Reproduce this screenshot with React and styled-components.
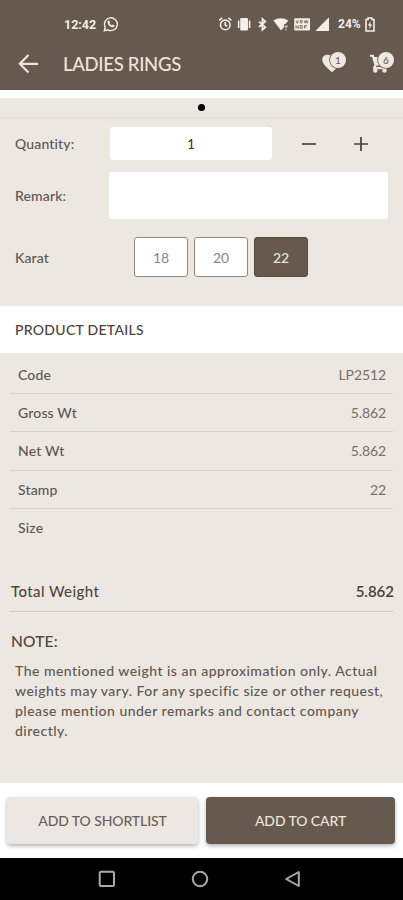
import React from 'react'
import styled, { createGlobalStyle } from 'styled-components'

const details = [
    { label: 'Code', value: 'LP2512' },
    { label: 'Gross Wt', value: '5.862' },
    { label: 'Net Wt', value: '5.862' },
    { label: 'Stamp', value: '22' },
    { label: 'Size', value: '' },
]

const noteLines = [
    'The mentioned weight is an approximation only. Actual',
    'weights may vary. For any specific size or other request,',
    'please mention under remarks and contact company',
    'directly.',
]

const StatusIcons = () => (
    <svg width="112" height="16" viewBox="218 16 112 16" fill="#f4eee8">
        {/* alarm */}
        <g fill="none" stroke="#f4eee8" strokeWidth="1.6">
            <circle cx="225.3" cy="24.9" r="4.8" />
            <path d="M219.2 20.3l3-2.5M231.4 20.3l-3-2.5M225.3 22v3.2l2 1" />
        </g>
        {/* vibrate */}
        <rect x="240.2" y="18" width="7.8" height="12.6" rx="1" />
        <path d="M237.8 20.5h1.6v7.6h-1.6zM248.8 20.5h1.6v7.6h-1.6z" />
        {/* bluetooth */}
        <path
            d="M259 21.6l6.4 5.6-3 2.6V18.8l3 2.6-6.4 5.6"
            fill="none"
            stroke="#f4eee8"
            strokeWidth="1.7"
        />
        {/* wifi */}
        <path d="M273.4 20.6c4.4-3.3 10.2-3.3 15 0l-3 3.4h-1.2v3l-3.2 3.4z" />
        <path d="M285 25.5h2.8v1.8h-1.4v1h-1.2zM285.2 29h1.3v1.4h-1.3z" opacity=".65" />
        {/* vowifi */}
        <rect x="294.2" y="18.2" width="15.8" height="12.2" rx=".8" />
        <path
            d="M296 20.4l1.2 3 1.2-3M300.2 20.5h2v2.4h-2zM304.2 20.4l1 2.8 1-2.8 1 2.8.8-2.8M296 28.5v-3l2.2 3v-3M300 25.6h2.4v2.6H300zM304.5 28.4v-2.8h2.6M304.5 27h2"
            fill="none"
            stroke="#66594e"
            strokeWidth=".8"
        />
        {/* signal */}
        <path d="M315.3 31H329V17.3z" />
    </svg>
)

const App = () => {
    return (
        <Screen>
            <GlobalStyle />
            <TopBar>
                <Status>
                    <Clock>12:42</Clock>
                    <svg width="16" height="16" viewBox="0 0 16 16" fill="none" stroke="#f4eee8">
                        <path d="M1.3 14.8l1-3.5A6.4 6.4 0 1 1 4.8 13.8z" strokeWidth="1.4" />
                        <path
                            d="M5.2 4.6l1-.2.9 2-.6.8c.6 1.1 1.3 1.8 2.4 2.2l.8-.8 1.9 1c0 1.2-1 1.8-2 1.7-2.5-.3-4.9-2.8-5.1-4.9 0-.8.3-1.4.7-1.8z"
                            fill="#f4eee8"
                            stroke="none"
                        />
                    </svg>
                    <StatusRight>
                        <StatusIcons />
                        <Battery>24%</Battery>
                        <svg width="10" height="15" viewBox="0 0 10 15">
                            <path
                                d="M1 2.5h2V1h4v1.5h2V14H1z"
                                fill="none"
                                stroke="#f4eee8"
                                strokeWidth="1.6"
                            />
                            <path d="M5.6 4.2L2.8 8.6h1.9l-.4 3.4 2.9-4.4H5.3z" fill="#f4eee8" />
                        </svg>
                    </StatusRight>
                </Status>
                <Header>
                    <svg width="20" height="20" viewBox="0 0 20 20" fill="none" stroke="#efe4da" strokeWidth="2.2">
                        <path d="M10.5 1L1.8 9.8l8.7 8.8M2 9.8h18" />
                    </svg>
                    <Title>LADIES RINGS</Title>
                    <Counter>
                        <svg width="20" height="20" viewBox="0 0 20 20" fill="#efe8e1">
                            <path d="M10 18.2C5.5 14.2.6 10.5.3 6 .1 3 2.3.8 5.3.8 7.3.8 9 1.6 10 3 11 1.6 12.7.8 14.7.8c3 0 5.2 2.2 5 5.2-.3 4.5-5.2 8.2-9.7 12.2z" />
                        </svg>
                        <Badge>1</Badge>
                    </Counter>
                    <Counter $last>
                        <svg width="20" height="20" viewBox="0 0 20 20" fill="#efe8e1">
                            <path d="M0 .8h3.6l.9 2.2h13.500l-2.500 8.600H6.600l-.6 1.400h11v2.200H3.400l-.5-1.800 1.500-2.500L2 2.800H0z" />
                            <circle cx="5.3" cy="16.6" r="2.2" />
                            <circle cx="14.5" cy="16.6" r="2.2" />
                        </svg>
                        <Badge>6</Badge>
                    </Counter>
                </Header>
            </TopBar>
            <Pager>
                <Dot />
            </Pager>
            <Form>
                <FormRow $height="33px">
                    <Label>Quantity:</Label>
                    <Quantity>1</Quantity>
                    <Step>
                        <path d="M0 7h14" />
                    </Step>
                    <Step $plus>
                        <path d="M0 7h14M7 0v14" />
                    </Step>
                </FormRow>
                <FormRow $height="47px">
                    <Label>Remark:</Label>
                    <Remark />
                </FormRow>
                <FormRow $height="40px">
                    <Label>Karat</Label>
                    <Karats>
                        <Karat>18</Karat>
                        <Karat>20</Karat>
                        <Karat $active>22</Karat>
                    </Karats>
                </FormRow>
            </Form>
            <SectionTitle>PRODUCT DETAILS</SectionTitle>
            <Details>
                {details.map((item) => (
                    <DetailRow key={item.label}>
                        <span>{item.label}</span>
                        <Value>{item.value}</Value>
                    </DetailRow>
                ))}
                <Total>
                    <span>Total Weight</span>
                    <TotalValue>5.862</TotalValue>
                </Total>
                <NoteTitle>NOTE:</NoteTitle>
                <Note>
                    {noteLines.map((line) => (
                        <div key={line}>{line}</div>
                    ))}
                </Note>
            </Details>
            <Actions>
                <Button>ADD TO SHORTLIST</Button>
                <Button $primary>ADD TO CART</Button>
            </Actions>
            <NavBar>
                <svg width="18" height="18" viewBox="0 0 18 18">
                    <rect x="1.7" y="1.7" width="14.3" height="14.3" rx="1.5" />
                </svg>
                <svg width="18" height="18" viewBox="0 0 18 18">
                    <circle cx="9" cy="9" r="7.2" />
                </svg>
                <svg width="18" height="18" viewBox="0 0 18 18">
                    <path d="M14.8 2v14L2.2 9z" strokeLinejoin="round" />
                </svg>
            </NavBar>
        </Screen>
    )
}

const GlobalStyle = createGlobalStyle`
    * {
        box-sizing: border-box;
    }
    body {
        margin: 0;
        background: #fff;
    }
`

const Screen = styled.div`
    display: flex;
    flex-direction: column;
    width: 403px;
    height: 900px;
    overflow: hidden;
    background: #ede7e1;
    color: #5f5751;
    font-family: Lato, sans-serif;
    font-size: 14px;
    font-weight: 500;
    white-space: nowrap;
    svg {
        display: block;
        flex: none;
    }
`

const TopBar = styled.div`
    height: 98px;
    background: #66594e;
    border-bottom: 8px solid #fff;
    flex: none;
`

const Status = styled.div`
    display: flex;
    align-items: center;
    height: 48px;
    padding-left: 64px;
`

const Clock = styled.span`
    width: 39px;
    color: #f4eee8;
    font-family: Roboto, sans-serif;
    font-size: 12.5px;
    font-weight: 700;
`

const StatusRight = styled.div`
    display: flex;
    align-items: center;
    margin-left: 99px;
`

const Battery = styled.span`
    width: 27px;
    margin-left: 8px;
    color: #f4eee8;
    font-family: Roboto, sans-serif;
    font-size: 12px;
    font-weight: 700;
`

const Header = styled.div`
    display: flex;
    align-items: center;
    height: 32px;
    padding-left: 18px;
`

const Title = styled.h1`
    width: 259px;
    margin: 0 0 0 25px;
    color: #efe4da;
    font-size: 18.5px;
    font-weight: 500;
    letter-spacing: -0.3px;
`

const Counter = styled.div`
    position: relative;
    width: 20px;
    margin-left: ${(props) => (props.$last ? '28px' : '0')};
`

const Badge = styled.span`
    position: absolute;
    top: -2px;
    right: -4px;
    width: 16px;
    height: 16px;
    border-radius: 50%;
    background: #efe8e1;
    box-shadow: 0 0 0 0.8px #66594e;
    color: #66594e;
    font-size: 10px;
    line-height: 16px;
    text-align: center;
`

const Pager = styled.div`
    display: flex;
    align-items: center;
    justify-content: center;
    height: 20px;
    border-bottom: 1px solid #e4dcd7;
    flex: none;
`

const Dot = styled.div`
    width: 7px;
    height: 7px;
    border-radius: 50%;
    background: #000;
`

const Form = styled.div`
    display: flex;
    flex-direction: column;
    height: 188px;
    padding: 9px 15px 0;
    flex: none;
`

const FormRow = styled.div`
    display: flex;
    align-items: center;
    height: ${(props) => props.$height};
    margin-bottom: ${(props) => (props.$height === '47px' ? '18px' : '12px')};
`

const Label = styled.div`
    width: 94px;
    letter-spacing: 0.15px;
`

const Quantity = styled.div`
    width: 162px;
    height: 33px;
    margin-left: 1px;
    border-radius: 3px;
    background: #fff;
    color: #3a332e;
    font-size: 13px;
    line-height: 34px;
    text-align: center;
`

const Step = styled.svg.attrs({ width: 14, height: 14, viewBox: '0 0 14 14' })`
    margin-left: ${(props) => (props.$plus ? '38px' : '30px')};
    stroke: #4a3f37;
    stroke-width: 1.7;
`

const Remark = styled.div`
    width: 279px;
    height: 47px;
    border-radius: 3px;
    background: #fff;
`

const Karats = styled.div`
    display: flex;
    gap: 6px;
    margin-left: 25px;
`

const Karat = styled.div`
    width: 54px;
    height: 40px;
    border: 1px solid ${(props) => (props.$active ? '#574a40' : '#8e8883')};
    border-radius: 3px;
    background: ${(props) => (props.$active ? '#66594e' : '#fff')};
    color: ${(props) => (props.$active ? '#efe4da' : '#8b8581')};
    font-weight: ${(props) => (props.$active ? 500 : 400)};
    line-height: 39px;
    text-align: center;
`

const SectionTitle = styled.h2`
    height: 47px;
    margin: 0;
    padding-left: 15px;
    background: #fff;
    color: #4a423c;
    font-size: 14px;
    font-weight: 500;
    letter-spacing: 0.3px;
    line-height: 48px;
    flex: none;
`

const Details = styled.div`
    height: 430px;
    padding: 2px 10px 0;
    flex: none;
`

const DetailRow = styled.div`
    display: flex;
    align-items: center;
    justify-content: space-between;
    height: 38.5px;
    padding: 0 7px 0 8px;
    border-bottom: 1px solid #d6d1cd;
    letter-spacing: 0.15px;
    &:nth-child(5) {
        border-bottom: 0;
        padding-bottom: 2px;
    }
    &:first-child {
        padding-top: 1px;
    }
`

const Value = styled.span`
    color: #77706a;
    font-weight: 400;
    letter-spacing: -0.1px;
`

const Total = styled.div`
    display: flex;
    align-items: center;
    justify-content: space-between;
    height: 39px;
    margin-top: 25px;
    padding: 0 0 2px 1px;
    border-bottom: 1px solid #cfcac7;
    font-size: 15px;
    letter-spacing: 0.4px;
    color: #4f4640;
`

const TotalValue = styled.span`
    color: #4a3f37;
    margin-right: -1px;
    font-weight: 600;
    letter-spacing: 0;
`

const NoteTitle = styled.h3`
    margin: 18px 0 0 1px;
    font-size: 15.5px;
    font-weight: 500;
    letter-spacing: 0.2px;
    line-height: 22px;
    color: #4f4640;
`

const Note = styled.div`
    margin-top: 9px;
    padding-left: 5px;
    letter-spacing: 0.48px;
    line-height: 20px;
`

const Actions = styled.div`
    display: grid;
    grid-template-columns: 191px 189px;
    column-gap: 8px;
    height: 75px;
    padding: 14px 0 0 7px;
    background: #fff;
    flex: none;
`

const Button = styled.button`
    height: 47px;
    padding: 0;
    border: 0;
    border-radius: 4px;
    background: ${(props) => (props.$primary ? '#66594e' : '#ede7e3')};
    box-shadow: 0 2px 4px rgba(0, 0, 0, 0.3);
    color: ${(props) => (props.$primary ? '#efe4da' : '#6b5f56')};
    font-family: inherit;
    font-size: 14px;
    font-weight: 500;
    letter-spacing: -0.1px;
`

const NavBar = styled.div`
    display: flex;
    gap: 75px;
    height: 42px;
    padding: 12px 0 0 98px;
    background: #000;
    flex: none;
    svg {
        fill: none;
        stroke: #aaa;
        stroke-width: 2;
    }
`

export default App
